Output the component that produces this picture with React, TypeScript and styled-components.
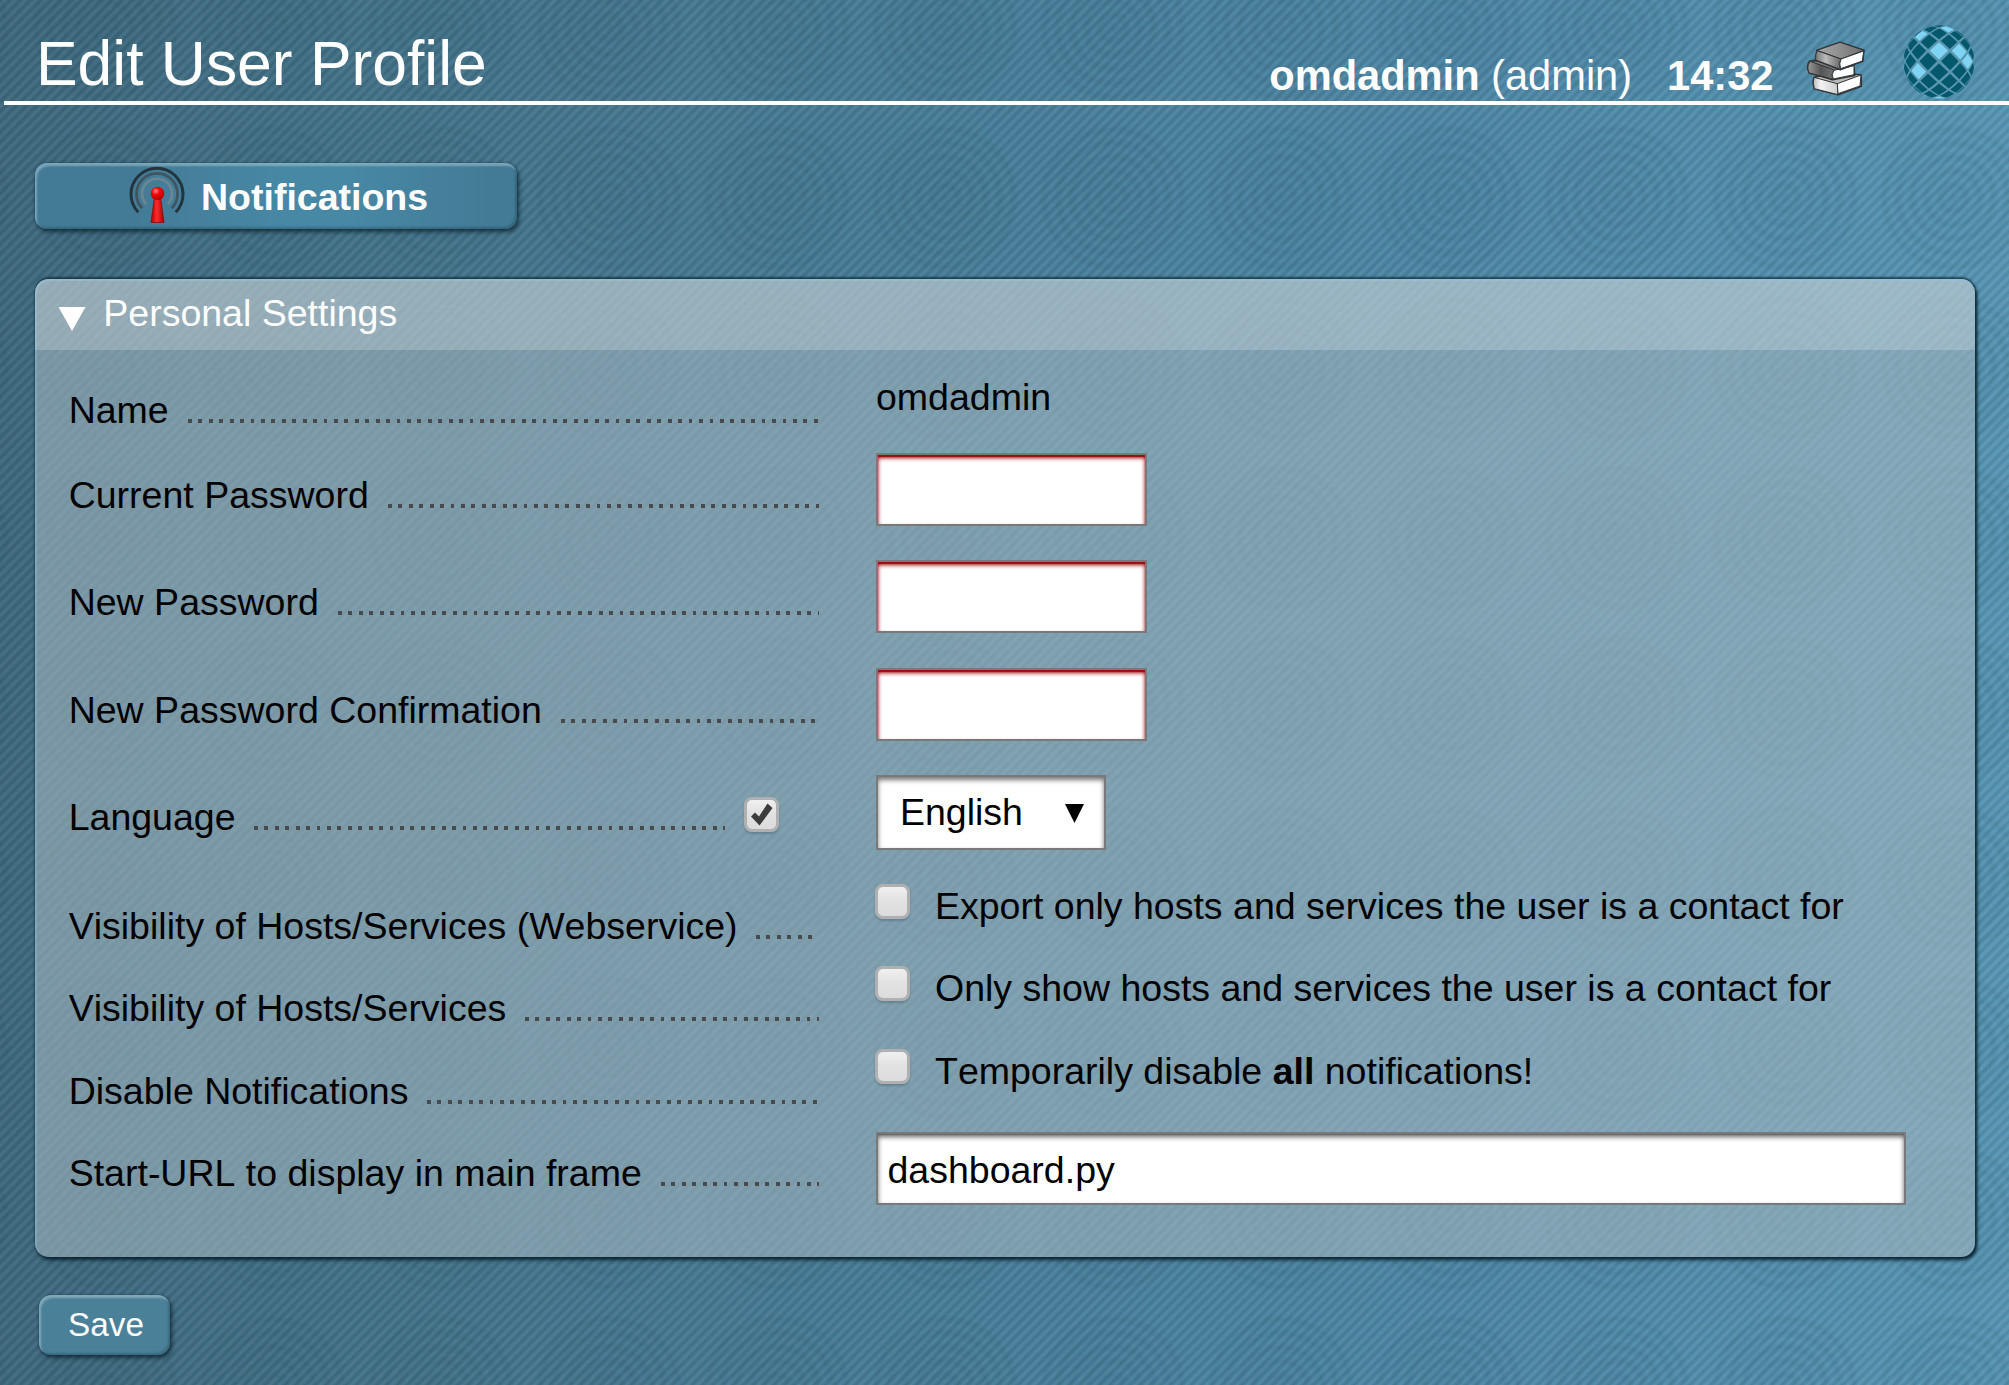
import React from "react";
import styled, { createGlobalStyle } from "styled-components";

const GlobalStyle = createGlobalStyle`
  html, body { margin: 0; padding: 0; }
  * { box-sizing: border-box; }
  body { font-family: "Liberation Sans", Arial, Helvetica, sans-serif; overflow: hidden; }
`;

const Page = styled.div`
  width: 2009px;
  height: 1385px;
  display: flex;
  flex-direction: column;
  font-size: 37.5px;
  line-height: 44px;
  font-kerning: none;
  color: #000;
  background-image:
    repeating-linear-gradient(135deg, rgba(10, 45, 65, 0.17) 0px, rgba(130, 185, 205, 0.1) 3.6px, rgba(10, 45, 65, 0.17) 7.2px),
    radial-gradient(circle, rgba(20, 60, 75, 0.11) 0px, rgba(20, 60, 75, 0.04) 7px, rgba(20, 60, 75, 0.11) 13px,
      rgba(20, 60, 75, 0.02) 20px, rgba(20, 60, 75, 0.1) 27px, rgba(20, 60, 75, 0.01) 34px, rgba(20, 60, 75, 0.1) 41px,
      rgba(20, 60, 75, 0) 48px, rgba(20, 60, 75, 0.09) 55px, rgba(20, 60, 75, 0) 62px, rgba(20, 60, 75, 0.08) 69px,
      rgba(20, 60, 75, 0) 74px),
    linear-gradient(90deg, #41697e 0%, #467388 17%, #4a7b94 35%, #4c829d 52%, #538cab 75%, #5c9ab8 100%);
  background-size: auto, 168px 170px, auto;
  background-position: 0 0, 21px 113px, 0 0;
`;

const Header = styled.header`
  height: 105px;
  margin-left: 4px;
  padding: 0 34px 0 32px;
  border-bottom: 4px solid #fff;
  display: flex;
  justify-content: space-between;
  align-items: flex-start;
  color: #fff;
`;

const Title = styled.h1`
  margin: 28.4px 0 0;
  font-size: 62.4px;
  line-height: 72px;
  font-weight: normal;
`;

const HeaderInfo = styled.div`
  display: flex;
  align-items: flex-start;
  font-size: 41.6px;
  line-height: 48px;
  white-space: pre;
`;

const UserText = styled.span`
  margin-top: 51.5px;
`;

const Clock = styled.b`
  margin: 51.5px 0 0 35px;
`;

const BookIcon = styled.svg`
  width: 60px;
  height: 56px;
  margin: 41px 0 0 32.5px;
`;

const BallIcon = styled.svg`
  width: 72px;
  height: 74px;
  margin: 25px 0 0 37px;
`;

const bevel = `
  border-radius: 12px;
  box-shadow: inset 2px 3px 2px rgba(190, 215, 225, 0.45), inset -2px -2px 2px rgba(20, 55, 70, 0.3),
    2px 3px 4px rgba(5, 25, 35, 0.65), 0 0 3px rgba(5, 25, 35, 0.4);
`;

const ContextButton = styled.a`
  ${bevel}
  width: 482px;
  height: 66px;
  margin: 58px 0 0 35px;
  padding: 3px 0 0 94px;
  display: flex;
  color: #fff;
  font-weight: bold;
  background: linear-gradient(90deg, #437b96 20%, #4788a5 52%, #4788a5 65%, #437b96 95%);
`;

const ContextLabel = styled.span`
  margin: 9px 0 0 16px;
`;

const Panel = styled.section`
  width: 1940px;
  height: 978px;
  margin: 50px 0 0 35px;
  border-radius: 14px;
  background: rgba(165, 185, 193, 0.58);
  box-shadow: inset 2px 2px 1px rgba(130, 180, 200, 0.6), 0 -2px 2px rgba(15, 45, 60, 0.75),
    2px 2px 3px rgba(10, 35, 48, 0.9), 1px 3px 4px rgba(10, 35, 48, 0.7);
`;

const PanelHead = styled.div`
  height: 71px;
  border-radius: 14px 14px 0 0;
  padding: 12px 0 0 23px;
  display: flex;
  color: #fff;
  background: rgba(255, 255, 255, 0.2);
`;

const Fold = styled.svg`
  width: 28px;
  height: 24px;
  margin: 16px 17.3px 0 0;
`;

const Form = styled.div`
  padding: 25px 0 0 33.7px;
`;

const Row = styled.div<{ $h: number }>`
  height: ${(p) => p.$h}px;
  display: grid;
  grid-template-columns: 750.3px 1fr;
  column-gap: 57px;
  align-items: start;
`;

const Legend = styled.div<{ $top: number }>`
  margin-top: ${(p) => p.$top}px;
  display: flex;
  white-space: nowrap;
`;

const Dots = styled.span`
  flex: 1 1 0;
  min-width: 0;
  height: 4px;
  margin: 31px 0 0 18.8px;
  background: repeating-linear-gradient(90deg, #484b4e 0, #484b4e 3.8px, transparent 3.8px, transparent 10.43px);
`;

const Box = styled.span`
  flex: none;
  width: 35px;
  height: 35px;
  border: 3px solid #aeb0b1;
  border-radius: 8px;
  background: linear-gradient(#f0f0f0, #e2e2e2 45%, #dcdcdc);
  box-shadow: 0 2px 2px rgba(70, 100, 115, 0.45);
  display: flex;
  align-items: center;
  justify-content: center;
`;

const LegendBox = styled(Box)`
  margin: 2px 40px 0 19px;
`;

const Field = styled.input<{ $w: number; $secret?: boolean }>`
  display: block;
  appearance: none;
  outline: none;
  width: ${(p) => p.$w}px;
  height: 73px;
  margin: 0;
  padding: 4px 9.5px 0;
  border: 2px solid #77797b;
  border-radius: 0;
  background: #fff;
  color: #000;
  font: 37.5px "Liberation Sans", Arial, sans-serif;
  font-kerning: none;
  box-shadow: ${(p) =>
    p.$secret
      ? "inset 0 3px 4px #a00c0c, inset 0 2px 1px #981010"
      : "inset 0 3px 5px rgba(0, 0, 0, 0.6), inset 0 1px 1px rgba(0, 0, 0, 0.2)"};
`;

const Select = styled.div`
  width: 230px;
  height: 75px;
  border: 2px solid #77797b;
  background: #fff;
  padding: 13px 20px 0 22px;
  display: flex;
  justify-content: space-between;
  box-shadow: inset 0 3px 5px rgba(0, 0, 0, 0.55);
`;

const SelectArrow = styled.svg`
  width: 19px;
  height: 19px;
  margin-top: 14px;
`;

const Check = styled.label`
  display: flex;
  gap: 25px;
  margin-left: -1px;
  white-space: pre;
`;

const SaveButton = styled.button`
  ${bevel}
  width: 131px;
  height: 60px;
  margin: 38px 0 0 39px;
  border: 0;
  padding: 0 0 0 3px;
  background: #4b8099;
  color: #fff;
  font: 33.3px "Liberation Sans", Arial, sans-serif;
  font-kerning: none;
`;

const LIT = new Set(["0,-1", "2,-1", "3,0", "-2,1", "-2,-3", "1,-4", "0,5"]);

/** Wraps a flat point (in radians) onto the visible half of a sphere. */
function project(x: number, y: number): string {
  const r = Math.hypot(x, y);
  if (r < 1e-6) return "36,37";
  const s = Math.sin(Math.min(r, Math.PI / 2));
  return `${(36 + (35.5 * s * x) / r).toFixed(2)},${(37 + (36.5 * s * y) / r).toFixed(2)}`;
}

function Ball() {
  const cells: React.ReactNode[] = [];
  const sx = 0.32;
  const sy = 0.3;
  const k = 0.83;
  for (let i = -5; i <= 5; i++) {
    for (let j = -5; j <= 5; j++) {
      if ((i + j) % 2 === 0) continue;
      const cx = i * sx;
      const cy = j * sy - 0.02;
      if (Math.hypot(cx, cy) > 1.58) continue;
      const pts = [
        [cx, cy - sy * k],
        [cx + (sx * k) / 2, cy - (sy * k) / 2],
        [cx + sx * k, cy],
        [cx + (sx * k) / 2, cy + (sy * k) / 2],
        [cx, cy + sy * k],
        [cx - (sx * k) / 2, cy + (sy * k) / 2],
        [cx - sx * k, cy],
        [cx - (sx * k) / 2, cy - (sy * k) / 2],
      ];
      cells.push(
        <polygon
          key={`${i},${j}`}
          points={pts.map(([x, y]) => project(x, y)).join(" ")}
          fill={LIT.has(`${i},${j}`) ? "#7fd3f3" : "#04586b"}
        />
      );
    }
  }
  return (
    <BallIcon viewBox="0 0 72 74">
      <ellipse cx="36" cy="37" rx="35" ry="36" fill="#5a97af" />
      {cells}
    </BallIcon>
  );
}

function Books() {
  return (
    <BookIcon viewBox="80 94 180 168">
      <defs>
        <linearGradient id="spine" x1="0" x2="1">
          <stop offset="0" stopColor="#777" />
          <stop offset="0.4" stopColor="#bbb" />
          <stop offset="1" stopColor="#666" />
        </linearGradient>
        <linearGradient id="spineDark" x1="0" x2="1">
          <stop offset="0" stopColor="#999" />
          <stop offset="0.5" stopColor="#555" />
          <stop offset="1" stopColor="#777" />
        </linearGradient>
        <linearGradient id="spineLight" x1="0" x2="1">
          <stop offset="0" stopColor="#bbb" />
          <stop offset="0.3" stopColor="#f4f4f4" />
          <stop offset="1" stopColor="#ccc" />
        </linearGradient>
        <linearGradient id="cover" x1="0" x2="1">
          <stop offset="0" stopColor="#aaa" />
          <stop offset="1" stopColor="#707070" />
        </linearGradient>
      </defs>
      <g stroke="#2f3437" strokeWidth="5" strokeLinejoin="round">
        <path d="M104 203 L170 185 L245 196 L246 230 L176 255 L105 237 Q99 220 104 203Z" fill="#bbb" />
        <path d="M104 203 L174 222 L176 255 L105 237 Q99 220 104 203Z" fill="url(#spineLight)" strokeWidth="3" />
        <path d="M174 222 L245 196 L242 229 L176 252Z" fill="#fff" strokeWidth="3" />
        <path d="M108 152 L90 155 Q80 172 90 190 L160 210 L226 197 L223 165Z" fill="#777" />
        <path d="M92 155 L165 181 Q153 194 162 209 L90 190 Q80 172 92 155Z" fill="url(#spineDark)" strokeWidth="3" />
        <path d="M164 182 L224 168 L224 195 L162 208 Q154 194 164 182Z" fill="#fff" strokeWidth="3" />
        <path d="M113 122 L182 98 L254 122 L250 155 L183 180 L109 151Z" fill="#999" />
        <path d="M113 122 L182 98 L254 122 L185 148Z" fill="url(#cover)" strokeWidth="3" />
        <path d="M113 123 L185 148 Q175 162 183 179 L109 151 Q108 132 113 123Z" fill="url(#spine)" strokeWidth="3" />
        <path d="M185 148 L253 124 L249 154 L184 177 Q178 162 185 148Z" fill="#fff" strokeWidth="3" />
      </g>
    </BookIcon>
  );
}

function Antenna() {
  const arc = (r: number) => {
    const dx = r * 0.72;
    const dy = r * 0.74;
    return `M${28 - dx} ${27 + dy} A${r} ${r} 0 1 1 ${28 + dx} ${27 + dy}`;
  };
  return (
    <svg width="56" height="58" viewBox="0 0 56 58" fill="none">
      <defs>
        <linearGradient id="pin" x1="0" x2="1">
          <stop offset="0" stopColor="#b00000" />
          <stop offset="0.45" stopColor="#ff2a2a" />
          <stop offset="1" stopColor="#a80000" />
        </linearGradient>
        <radialGradient id="knob" cx="0.38" cy="0.32" r="0.7">
          <stop offset="0" stopColor="#ff8080" />
          <stop offset="0.4" stopColor="#f20808" />
          <stop offset="1" stopColor="#b00000" />
        </radialGradient>
      </defs>
      <path d={arc(26)} stroke="#22343e" strokeWidth="3" />
      <path d={arc(20.5)} stroke="#3f5560" strokeWidth="2.8" />
      <path d={arc(15)} stroke="#6d8792" strokeWidth="2.6" />
      <path d="M25.5 31 L22 56.5 H35 L31.5 31Z" fill="url(#pin)" stroke="#7a1015" strokeWidth="0.8" />
      <circle cx="28.5" cy="27.5" r="6.8" fill="url(#knob)" />
    </svg>
  );
}

interface SettingProps {
  label: string;
  height: number;
  top?: number;
  marker?: React.ReactNode;
  children: React.ReactNode;
}

function Setting({ label, height, top = 20, marker, children }: SettingProps) {
  return (
    <Row $h={height}>
      <Legend $top={top}>
        <span>{label}</span>
        <Dots />
        {marker}
      </Legend>
      {children}
    </Row>
  );
}

export default function App() {
  return (
    <>
      <GlobalStyle />
      <Page>
        <Header>
          <Title>Edit User Profile</Title>
          <HeaderInfo>
            <UserText>
              <b>omdadmin</b> (admin)
            </UserText>
            <Clock>14:32</Clock>
            <Books />
            <Ball />
          </HeaderInfo>
        </Header>

        <ContextButton>
          <Antenna />
          <ContextLabel>Notifications</ContextLabel>
        </ContextButton>

        <Panel>
          <PanelHead>
            <Fold viewBox="0 0 28 24">
              <path d="M0.5 0 H27.5 L14 24Z" fill="#fff" />
            </Fold>
            Personal Settings
          </PanelHead>
          <Form>
            <Setting label="Name" height={78} top={13}>
              <span>omdadmin</span>
            </Setting>
            <Setting label="Current Password" height={107}>
              <Field type="password" $w={271} $secret />
            </Setting>
            <Setting label="New Password" height={108}>
              <Field type="password" $w={271} $secret />
            </Setting>
            <Setting label="New Password Confirmation" height={107}>
              <Field type="password" $w={271} $secret />
            </Setting>
            <Setting
              label="Language"
              height={109}
              marker={
                <LegendBox>
                  <svg width="24" height="24" viewBox="0 0 24 24">
                    <path d="M2 13.5 L6 9.5 L10 13.5 L18.5 0.5 L23.5 5 L10.5 22.5Z" fill="#3c3c3c" />
                  </svg>
                </LegendBox>
              }
            >
              <Select>
                English
                <SelectArrow viewBox="0 0 19 19">
                  <path d="M0 0 H19 L9.5 19Z" fill="#000" />
                </SelectArrow>
              </Select>
            </Setting>
            <Setting label="Visibility of Hosts/Services (Webservice)" height={82}>
              <Check>
                <Box />
                <span>Export only hosts and services the user is a contact for</span>
              </Check>
            </Setting>
            <Setting label="Visibility of Hosts/Services" height={83}>
              <Check>
                <Box />
                <span>Only show hosts and services the user is a contact for</span>
              </Check>
            </Setting>
            <Setting label="Disable Notifications" height={83}>
              <Check>
                <Box />
                <span>
                  Temporarily disable <b>all</b> notifications!
                </span>
              </Check>
            </Setting>
            <Setting label="Start-URL to display in main frame" height={74} top={19}>
              <Field type="text" defaultValue="dashboard.py" $w={1030} />
            </Setting>
          </Form>
        </Panel>

        <SaveButton>Save</SaveButton>
      </Page>
    </>
  );
}
